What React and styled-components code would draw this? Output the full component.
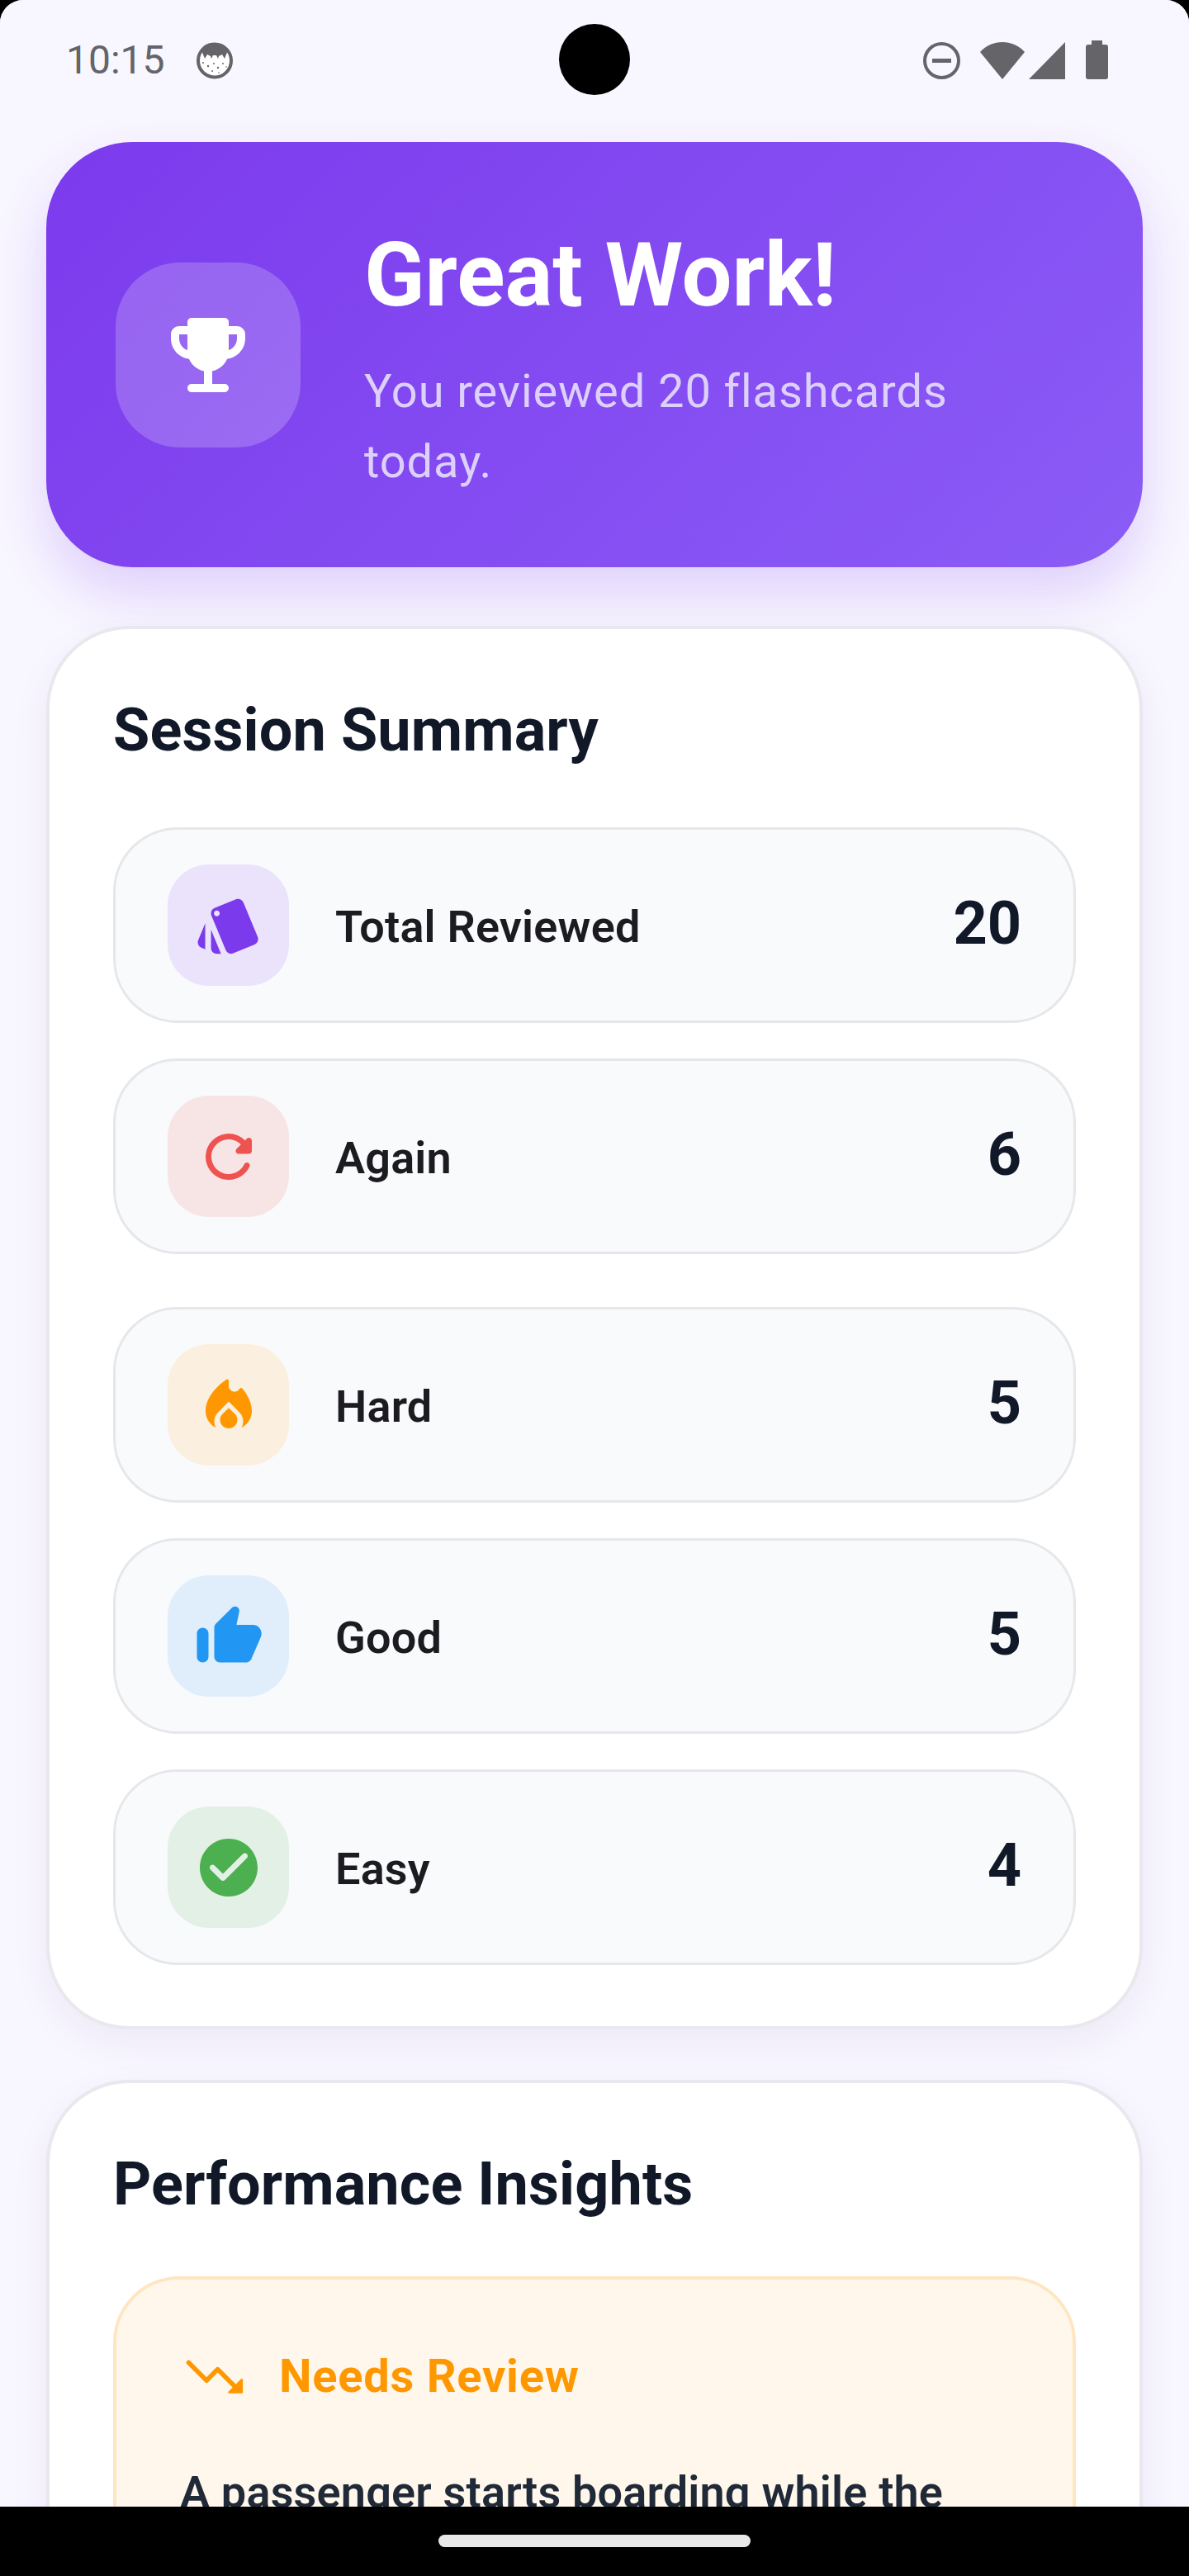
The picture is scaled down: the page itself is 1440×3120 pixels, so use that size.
import React from 'react';
import styled, { createGlobalStyle } from 'styled-components';

const GlobalStyle = createGlobalStyle`
  html, body {
    margin: 0;
    padding: 0;
    background: #000;
    font-family: Roboto, "Noto Sans", sans-serif;
  }
`;

const Phone = styled.div`
  position: relative;
  width: 1440px;
  height: 3120px;
  overflow: hidden;
  background: #f8f6ff;
  border-radius: 28px 28px 0 0;
`;

const StatusBar = styled.div`
  position: relative;
  z-index: 2;
  height: 144px;
  box-sizing: border-box;
  padding: 50px 98px 0 80px;
  display: flex;
  justify-content: space-between;
  align-items: flex-start;
  background: #f8f6ff;
  color: #656468;
`;

const StatusLeft = styled.div`
  display: flex;
  align-items: center;
  gap: 38px;
`;

const Clock = styled.span`
  font-size: 48px;
  line-height: 46px;
  font-weight: 400;
`;

const StatusRight = styled.div`
  display: flex;
  align-items: flex-start;
  padding-top: 1px;
`;

const Camera = styled.div`
  position: absolute;
  z-index: 3;
  top: 29px;
  left: 677px;
  width: 86px;
  height: 86px;
  border-radius: 50%;
  background: #000;
`;

const Content = styled.main`
  padding: 28px 56px 0;
`;

const Hero = styled.section`
  height: 515px;
  box-sizing: border-box;
  padding: 0 70px 0 84px;
  display: flex;
  align-items: center;
  gap: 77px;
  border-radius: 104px;
  background: linear-gradient(135deg, #7c3aed, #8b5cf6);
  box-shadow: 0 32px 64px rgba(124, 58, 237, 0.2);
`;

const HeroTile = styled.div`
  flex: none;
  width: 224px;
  height: 224px;
  border-radius: 78px;
  background: rgba(255, 255, 255, 0.2);
  display: flex;
  align-items: center;
  justify-content: center;
  color: #fff;
`;

const HeroText = styled.div`
  display: flex;
  flex-direction: column;
  gap: 38px;
  padding-top: 14px;
`;

const HeroTitle = styled.h1`
  margin: 0;
  font-size: 108px;
  line-height: 122px;
  font-weight: 700;
  color: #fff;
`;

const HeroSub = styled.p`
  margin: 0;
  font-size: 56px;
  line-height: 85px;
  letter-spacing: 0.92px;
  color: #ddd0fb;
`;

const Card = styled.section`
  margin-top: ${(p) => p.$top}px;
  box-sizing: border-box;
  padding: 83px 77px 74px;
  background: #fff;
  border: 4px solid #e8e8ee;
  border-radius: 100px;
  box-shadow: 0 16px 48px rgba(60, 40, 120, 0.06);
`;

const CardTitle = styled.h2`
  margin: 0 0 ${(p) => p.$after}px;
  font-size: 72px;
  line-height: 80px;
  font-weight: 700;
  letter-spacing: 0.1px;
  color: #111827;
`;

const StatRow = styled.div`
  height: 237px;
  box-sizing: border-box;
  margin-top: ${(p) => p.$top}px;
  padding: 0 63px;
  display: flex;
  align-items: center;
  background: #f9fafc;
  border: 3px solid #e5e7eb;
  border-radius: 78px;
`;

const IconTile = styled.div`
  flex: none;
  width: 147px;
  height: 147px;
  border-radius: 50px;
  background: ${(p) => p.$bg};
  color: ${(p) => p.$fg};
  display: flex;
  align-items: center;
  justify-content: center;
`;

const StatLabel = styled.span`
  flex: 1;
  margin: 3px 0 0 56px;
  font-size: 54px;
  font-weight: 600;
  letter-spacing: 0.2px;
  color: #1c1b1f;
`;

const StatValue = styled.span`
  margin-bottom: 5px;
  font-size: 72px;
  font-weight: 700;
  color: #111827;
`;

const InsightBox = styled.div`
  height: 700px;
  box-sizing: border-box;
  padding: 75px 77px;
  background: #fff7eb;
  border: 4px solid #ffe6c2;
  border-radius: 80px;
`;

const InsightHead = styled.div`
  display: flex;
  align-items: center;
  gap: 36px;
  color: #ff9800;
`;

const InsightTitle = styled.span`
  font-size: 56px;
  line-height: 64px;
  font-weight: 700;
  letter-spacing: 0.75px;
`;

const InsightBody = styled.p`
  margin: 60px 0 0;
  font-size: 54px;
  line-height: 78px;
  font-weight: 600;
  letter-spacing: 0.2px;
  color: #1f2937;
`;

const NavBar = styled.div`
  position: absolute;
  z-index: 4;
  left: 0;
  right: 0;
  bottom: 0;
  height: 84px;
  background: #000;
`;

const HomePill = styled.div`
  position: absolute;
  left: 531px;
  top: 34px;
  width: 378px;
  height: 15px;
  border-radius: 8px;
  background: #e8e8e8;
`;

const Icon = ({ d, size = 84 }) => (
  <svg width={size} height={size} viewBox="0 0 24 24" fill="currentColor" style={{ display: 'block', flex: 'none' }}>
    <path d={d} fillRule="evenodd" />
  </svg>
);

const paths = {
  trophy: 'M19 5h-2V4c0-.55-.45-1-1-1H8c-.55 0-1 .45-1 1v1H5c-1.1 0-2 .9-2 2v1c0 2.55 1.92 4.63 4.39 4.94.63 1.5 1.98 2.63 3.61 2.96V19H8c-.55 0-1 .45-1 1s.45 1 1 1h8c.55 0 1-.45 1-1s-.45-1-1-1h-3v-3.1c1.63-.33 2.98-1.46 3.61-2.96C19.08 12.63 21 10.55 21 8V7c0-1.1-.9-2-2-2zM5 8V7h2v3.82C5.84 10.4 5 9.3 5 8zm14 0c0 1.3-.84 2.4-2 2.82V7h2v1z',
  cards: 'M2.53 19.65l1.34.56v-9.03l-2.43 5.86c-.41 1.02.08 2.19 1.09 2.61zm19.5-3.7L17.07 3.98c-.31-.75-1.04-1.21-1.81-1.23-.26 0-.53.04-.79.15L7.1 5.95c-.75.31-1.21 1.03-1.23 1.8-.01.27.04.54.15.8l4.96 11.97c.31.76 1.05 1.22 1.83 1.23.26 0 .52-.05.77-.15l7.36-3.05c1.02-.42 1.51-1.59 1.09-2.6zM7.88 8.75c-.55 0-1-.45-1-1s.45-1 1-1 1 .45 1 1-.45 1-1 1zm-2 11c0 1.1.9 2 2 2h1.45l-3.45-8.34v6.34z',
  refresh: 'M17.65 6.35c-1.63-1.63-3.94-2.57-6.48-2.31-3.67.37-6.69 3.35-7.1 7.02C3.52 15.91 7.27 20 12 20c3.19 0 5.93-1.87 7.21-4.56.32-.67-.16-1.44-.9-1.44-.37 0-.72.2-.88.53-1.13 2.43-3.84 3.97-6.8 3.31-2.22-.49-4.01-2.3-4.48-4.52C5.31 9.44 8.26 6 12 6c1.66 0 3.14.69 4.22 1.78l-1.51 1.51c-.63.63-.19 1.71.7 1.71H19c.55 0 1-.45 1-1V6.41c0-.89-1.08-1.34-1.71-.71l-.64.65z',
  fire: 'M12 12.9l-2.13 2.09C9.31 15.55 9 16.28 9 17.06 9 18.68 10.35 20 12 20s3-1.32 3-2.94c0-.78-.31-1.52-.87-2.07L12 12.9zM16 6l-.44.55C14.38 8.02 12 7.19 12 5.3V3.5c0-.38-.47-.63-.8-.4C9.2 4.47 4 8.63 4 14c0 2.4 1.3 4.6 3.6 5.8-.4-.7-.6-1.5-.6-2.3 0-1.1.45-2.1 1.2-2.9L12 10.7l3.8 3.9c.75.8 1.2 1.8 1.2 2.9 0 .8-.2 1.6-.6 2.3 2.3-1.2 3.6-3.4 3.6-5.8 0-3.4-2-6.2-3.1-7.6-.28-.35-.66-.4-.9-.4z',
  thumb: 'M13.12 2.06L7.58 7.6c-.37.37-.58.88-.58 1.41V19c0 1.1.9 2 2 2h9c.8 0 1.52-.48 1.84-1.21l3.26-7.61C23.94 10.2 22.49 8 20.34 8h-5.65l.95-4.58c.1-.5-.05-1.01-.41-1.37-.59-.58-1.53-.58-2.11.01zM3 21c1.1 0 2-.9 2-2v-8c0-1.1-.9-2-2-2s-2 .9-2 2v8c0 1.1.9 2 2 2z',
  check: 'M12 2C6.48 2 2 6.48 2 12s4.48 10 10 10 10-4.48 10-10S17.52 2 12 2zM9.29 16.29 5.7 12.7c-.39-.39-.39-1.02 0-1.41.39-.39 1.02-.39 1.41 0L10 14.17l6.88-6.88c.39-.39 1.02-.39 1.41 0 .39.39.39 1.02 0 1.41l-7.59 7.59c-.38.39-1.02.39-1.41 0z',
};

const stats = [
  { label: 'Total Reviewed', value: 20, icon: 'cards', bg: '#ebe2fb', fg: '#7c3aed', top: 0 },
  { label: 'Again', value: 6, icon: 'refresh', bg: '#f7e5e6', fg: '#ef5350', top: 43 },
  { label: 'Hard', value: 5, icon: 'fire', bg: '#fbefdf', fg: '#ff9800', top: 64 },
  { label: 'Good', value: 5, icon: 'thumb', bg: '#e0edfb', fg: '#2196f3', top: 43 },
  { label: 'Easy', value: 4, icon: 'check', bg: '#e3f0e6', fg: '#4caf50', top: 43 },
];

const TrendDownIcon = () => (
  <svg width="84" height="84" viewBox="0 0 24 24" style={{ display: 'block', flex: 'none' }}>
    <path d="M3 7.3L9.2 13.5L13 9.6L20 16.6" fill="none" stroke="currentColor" strokeWidth="1.6" strokeLinecap="round" strokeLinejoin="round" />
    <path d="M21.4 13.2V17.6H17Z" fill="currentColor" stroke="currentColor" strokeWidth="0.7" strokeLinejoin="round" />
  </svg>
);

const CookieIcon = () => (
  <svg width="44" height="45" viewBox="0 0 44 45" style={{ display: 'block' }}>
    <circle cx="22" cy="22.5" r="20" fill="#fff" stroke="#656468" strokeWidth="4" />
    <path d="M6 10 C12 0 32 0 38 10 L34 20 L31 15 L27 17 L26 20 L24 16 L20 16 L18 20 L17 17 L13 15 L10 20 Z" fill="#656468" />
    <g fill="#656468">
      <circle cx="8" cy="25" r="1" />
      <circle cx="14" cy="29" r="1.2" />
      <circle cx="21" cy="26" r="1" />
      <circle cx="26" cy="31" r="1.2" />
      <circle cx="32" cy="26" r="1" />
      <circle cx="19" cy="35" r="1" />
      <circle cx="27" cy="37" r="0.8" />
      <circle cx="36" cy="30" r="0.8" />
    </g>
  </svg>
);

const DndIcon = () => (
  <svg width="45" height="45" viewBox="0 0 45 45" style={{ marginRight: 24 }}>
    <circle cx="22.5" cy="22.5" r="20.5" fill="none" stroke="#656468" strokeWidth="4" />
    <rect x="11" y="20" width="23" height="5" fill="#656468" />
  </svg>
);

const WifiIcon = () => (
  <svg width="54" height="45" viewBox="0 0 54 45" style={{ marginRight: 5 }}>
    <path d="M0 12 C14 -4 40 -4 54 12 L27 45 Z" fill="#656468" />
  </svg>
);

const SignalIcon = () => (
  <svg width="44" height="45" viewBox="0 0 44 45" style={{ marginRight: 25 }}>
    <path d="M44 0 V45 H0 Z" fill="#656468" />
  </svg>
);

const BatteryIcon = () => (
  <svg width="27" height="47" viewBox="0 0 27 47" style={{ marginTop: -2 }}>
    <path d="M7 5 V0 H20 V5 H24 Q27 5 27 8 V44 Q27 47 24 47 H3 Q0 47 0 44 V8 Q0 5 3 5 Z" fill="#656468" />
  </svg>
);

export default function App() {
  return (
    <Phone>
      <GlobalStyle />
      <StatusBar>
        <StatusLeft>
          <Clock>10:15</Clock>
          <CookieIcon />
        </StatusLeft>
        <StatusRight>
          <DndIcon />
          <WifiIcon />
          <SignalIcon />
          <BatteryIcon />
        </StatusRight>
      </StatusBar>
      <Camera />
      <Content>
        <Hero>
          <HeroTile>
            <Icon d={paths.trophy} size={120} />
          </HeroTile>
          <HeroText>
            <HeroTitle>Great Work!</HeroTitle>
            <HeroSub>You reviewed 20 flashcards today.</HeroSub>
          </HeroText>
        </Hero>
        <Card $top={71}>
          <CardTitle $after={77}>Session Summary</CardTitle>
          {stats.map((s) => (
            <StatRow key={s.label} $top={s.top}>
              <IconTile $bg={s.bg} $fg={s.fg}>
                <Icon d={paths[s.icon]} />
              </IconTile>
              <StatLabel>{s.label}</StatLabel>
              <StatValue>{s.value}</StatValue>
            </StatRow>
          ))}
        </Card>
        <Card $top={61}>
          <CardTitle $after={71}>Performance Insights</CardTitle>
          <InsightBox>
            <InsightHead>
              <TrendDownIcon />
              <InsightTitle>Needs Review</InsightTitle>
            </InsightHead>
            <InsightBody>A passenger starts boarding while the</InsightBody>
          </InsightBox>
        </Card>
      </Content>
      <NavBar>
        <HomePill />
      </NavBar>
    </Phone>
  );
}
